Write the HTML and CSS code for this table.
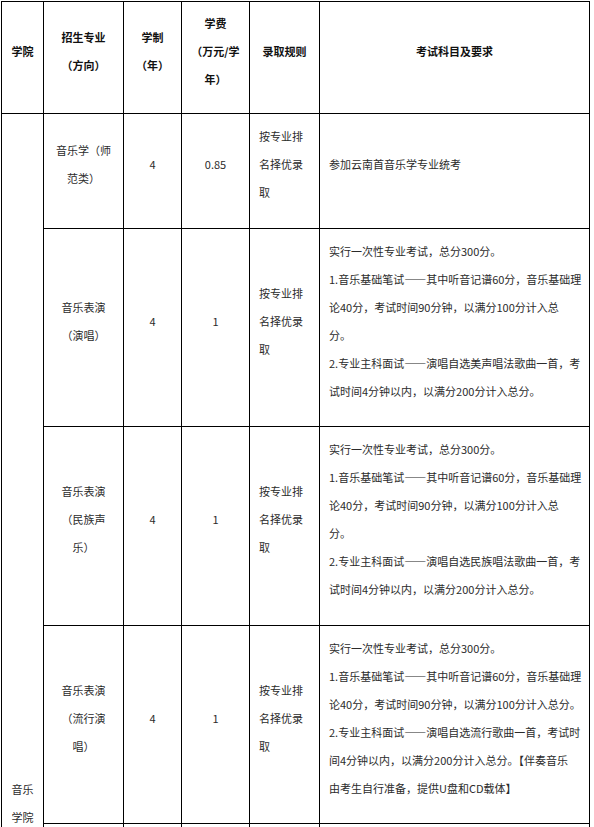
FILE: index.html
```html
<!DOCTYPE html>
<html lang="zh">
<head>
<meta charset="utf-8">
<title>招生专业</title>
<link rel="stylesheet" href="styles.css">
</head>
<body>
<table class="plan">
  <colgroup>
    <col class="c-school">
    <col class="c-major">
    <col class="c-years">
    <col class="c-fee">
    <col class="c-rule">
    <col class="c-exam">
  </colgroup>
  <thead>
    <tr class="r-head">
      <th>学院</th>
      <th>招生专业<br><span class="po">（</span>方向<span class="pc">）</span></th>
      <th>学制<br><span class="po">（</span>年<span class="pc">）</span></th>
      <th>学费<br><span class="po">（</span>万元/学<br>年<span class="pc">）</span></th>
      <th>录取规则</th>
      <th>考试科目及要求</th>
    </tr>
  </thead>
  <tbody>
    <tr class="r-1">
      <td class="school" rowspan="5">音乐<br>学院</td>
      <td class="center">音乐学（师<br>范类<span class="pc">）</span></td>
      <td class="center">4</td>
      <td class="center">0.85</td>
      <td class="rule">按专业排<br>名择优录<br>取</td>
      <td class="exam">参加云南首音乐学专业统考</td>
    </tr>
    <tr class="r-2">
      <td class="center">音乐表演<br><span class="po">（</span>演唱<span class="pc">）</span></td>
      <td class="center">4</td>
      <td class="center">1</td>
      <td class="rule">按专业排<br>名择优录<br>取</td>
      <td class="exam">实行一次性专业考试，总分300分。<br>1.音乐基础笔试——其中听音记谱60分，音乐基础理<br>论40分，考试时间90分钟，以满分100分计入总<br>分。<br>2.专业主科面试——演唱自选美声唱法歌曲一首，考<br>试时间4分钟以内，以满分200分计入总分。</td>
    </tr>
    <tr class="r-3">
      <td class="center">音乐表演<br><span class="po">（</span>民族声<br>乐<span class="pc">）</span></td>
      <td class="center">4</td>
      <td class="center">1</td>
      <td class="rule">按专业排<br>名择优录<br>取</td>
      <td class="exam">实行一次性专业考试，总分300分。<br>1.音乐基础笔试——其中听音记谱60分，音乐基础理<br>论40分，考试时间90分钟，以满分100分计入总<br>分。<br>2.专业主科面试——演唱自选民族唱法歌曲一首，考<br>试时间4分钟以内，以满分200分计入总分。</td>
    </tr>
    <tr class="r-4">
      <td class="center">音乐表演<br><span class="po">（</span>流行演<br>唱<span class="pc">）</span></td>
      <td class="center">4</td>
      <td class="center">1</td>
      <td class="rule">按专业排<br>名择优录<br>取</td>
      <td class="exam">实行一次性专业考试，总分300分。<br>1.音乐基础笔试——其中听音记谱60分，音乐基础理<br>论40分，考试时间90分钟，以满分100分计入总分。<br>2.专业主科面试——演唱自选流行歌曲一首，考试时<br>间4分钟以内，以满分200分计入总分。【伴奏音乐<br>由考生自行准备，提供U盘和CD载体】</td>
    </tr>
    <tr class="r-more">
      <td></td>
      <td></td>
      <td></td>
      <td></td>
      <td></td>
    </tr>
  </tbody>
</table>
</body>
</html>
```

FILE: styles.css
```css
html, body {
  margin: 0;
  padding: 0;
  background: #fff;
}

body {
  font-family: "Microsoft YaHei", "Noto Sans CJK SC", "Noto Sans", sans-serif;
  font-size: 11px;
  color: #2b2b2b;
}

.plan {
  border-collapse: collapse;
  table-layout: fixed;
  width: 588px;
  margin: 1px 0 0 1px;
}

.c-school { width: 42px; }
.c-major  { width: 80px; }
.c-years  { width: 58px; }
.c-fee    { width: 68px; }
.c-rule   { width: 70px; }
.c-exam   { width: 270px; }

.plan th,
.plan td {
  border: 1px solid #000;
  line-height: 28px;
  vertical-align: middle;
  padding: 0 8px 14px 9px;
  white-space: nowrap;
}

.plan th {
  font-weight: bold;
  color: #111;
  text-align: center;
  padding-left: 0;
  padding-right: 0;
}

/* full-width brackets kept at full width at line edges */
.po,
.pc {
  display: inline-block;
  width: 1em;
}

.po { text-align: right; }
.pc { text-align: left; }

.r-head { height: 112px; }
.r-1 { height: 115px; }
.r-2 { height: 198px; }
.r-3 { height: 199px; }
.r-4 { height: 198px; }
.r-more { height: 682px; }

.plan td.center,
.plan td.school {
  text-align: center;
  padding-left: 0;
  padding-right: 0;
}

.plan td.rule,
.plan td.exam {
  text-align: left;
}
```
